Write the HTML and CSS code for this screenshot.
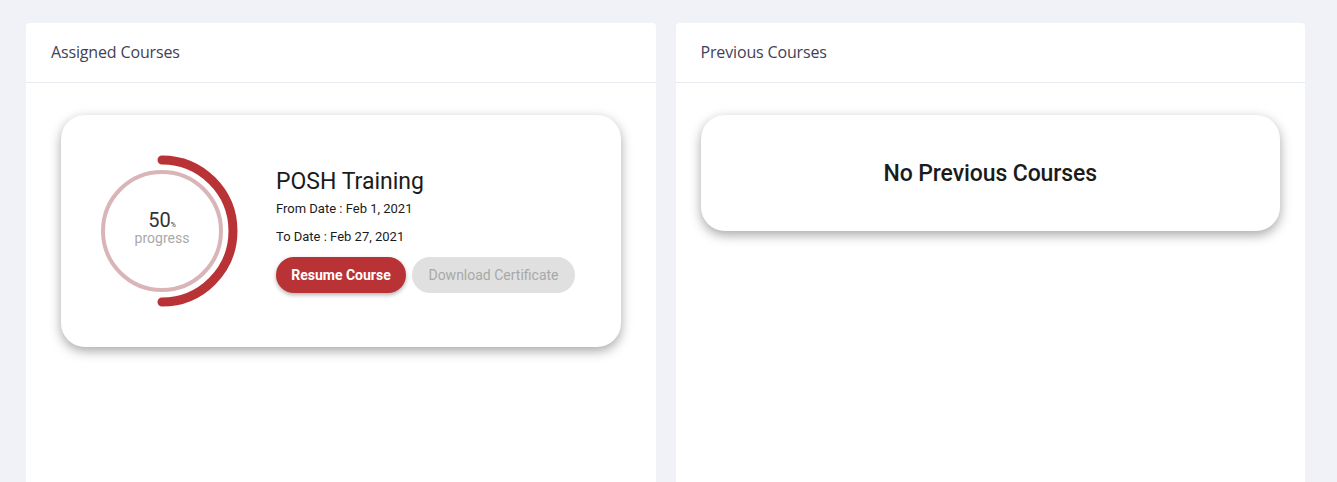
FILE: index.html
```html
<!DOCTYPE html>
<html>
<head>
<meta charset="utf-8">
<link rel="stylesheet" href="styles.css">
</head>
<body>
<div class="page">
  <section class="panel">
    <div class="panel-head">Assigned Courses</div>
    <div class="panel-body">
      <div class="course-card">
        <div class="progress">
          <svg width="160" height="160" viewBox="0 0 160 160">
            <circle cx="80" cy="80" r="59" fill="none" stroke="#d9b5b8" stroke-width="4"/>
            <path d="M80 9 A71 71 0 0 1 80 151" fill="none" stroke="#b83236" stroke-width="9" stroke-linecap="round"/>
          </svg>
          <div class="progress-text">
            <div class="pct">50<span class="pct-sign">%</span></div>
            <div class="plabel">progress</div>
          </div>
        </div>
        <div class="course-info">
          <div class="course-title">POSH Training</div>
          <div class="course-date">From Date : Feb 1, 2021</div>
          <div class="course-date second">To Date : Feb 27, 2021</div>
          <div class="actions">
            <button class="btn btn-primary">Resume Course</button>
            <button class="btn btn-disabled">Download Certificate</button>
          </div>
        </div>
      </div>
    </div>
  </section>
  <section class="panel">
    <div class="panel-head">Previous Courses</div>
    <div class="panel-body">
      <div class="empty-card">No Previous Courses</div>
    </div>
  </section>
</div>
</body>
</html>
```
FILE: styles.css
```css
html, body {
  margin: 0;
  padding: 0;
  background: #f1f2f7;
  height: 100%;
}
.page {
  display: flex;
  gap: 20px;
  padding: 23px 32px 0 26px;
  height: 100%;
  box-sizing: border-box;
}
.panel {
  flex: 1;
  background: #fff;
  border-radius: 4px 4px 0 0;
  display: flex;
  flex-direction: column;
}
.panel-head {
  height: 60px;
  box-sizing: border-box;
  padding: 0 25px 2px 25px;
  display: flex;
  align-items: center;
  border-bottom: 1px solid #e8e9ee;
  font-family: "Open Sans", "Lato", sans-serif;
  font-size: 16px;
  color: #3f4256;
  letter-spacing: -0.15px;
}
.panel-body {
  padding: 32px 25px 0 25px;
  flex: 1;
}
.course-card {
  margin: 0 10px;
  height: 232px;
  box-sizing: border-box;
  background: #fff;
  border-radius: 24px;
  box-shadow: 0 4px 12px rgba(0,0,0,0.35);
  display: flex;
  align-items: center;
  padding: 0 0 0 21px;
  font-family: "Roboto", sans-serif;
}
.progress {
  position: relative;
  width: 160px;
  height: 160px;
  flex: none;
}
.progress svg {
  display: block;
}
.progress-text {
  position: absolute;
  inset: 0;
  display: flex;
  flex-direction: column;
  align-items: center;
  justify-content: center;
}
.pct {
  font-size: 20px;
  color: #333;
  line-height: 20px;
  margin-top: -7px;
}
.pct-sign {
  font-size: 7px;
}
.plabel {
  font-size: 14px;
  color: #a9a9a9;
  line-height: 14px;
  margin-top: -4px;
}
.course-info {
  margin-left: 34px;
  display: flex;
  flex-direction: column;
  margin-top: 0;
}
.course-title {
  font-size: 23px;
  color: #1b1b1b;
  line-height: 26px;
}
.course-date {
  font-size: 13px;
  color: #1b1b1b;
  line-height: 14px;
  margin-top: 7px;
}
.course-date.second {
  margin-top: 14px;
}
.actions {
  display: flex;
  gap: 6px;
  margin-top: 13px;
}
.btn {
  height: 36px;
  border: none;
  border-radius: 18px;
  font-family: "Roboto", sans-serif;
  font-size: 14px;
  padding: 0;
}
.btn-primary {
  width: 130px;
  background: #b83236;
  color: #fff;
  font-weight: 700;
  box-shadow: 0 2px 4px rgba(0,0,0,0.3);
}
.btn-disabled {
  width: 163px;
  background: #e0e0e0;
  color: #a8a8a8;
}
.empty-card {
  height: 116px;
  border-radius: 24px;
  background: #fff;
  box-shadow: 0 4px 12px rgba(0,0,0,0.35);
  display: flex;
  align-items: center;
  justify-content: center;
  font-family: "Roboto", sans-serif;
  font-size: 23px;
  font-weight: 500;
  letter-spacing: -0.1px;
  color: #1b1b1b;
  box-sizing: border-box;
}
```
